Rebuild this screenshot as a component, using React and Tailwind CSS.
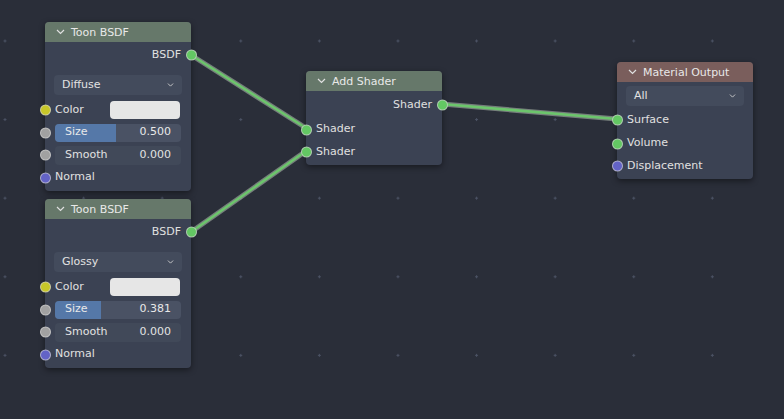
import React from "react";

const SOCKET = {
  shader: "bg-[#63c763]",
  color: "bg-[#c7c729]",
  float: "bg-[#a1a1a1]",
  vector: "bg-[#6363c7]",
};

const Socket = ({ type, side }) => (
  <span
    className={`absolute top-1/2 -translate-y-1/2 w-[11px] h-[11px] rounded-full border border-[#d0d0d0]/70 ${SOCKET[type]} ${
      side === "left" ? "left-[-5.5px]" : "right-[-5.5px]"
    }`}
  />
);

const Chevron = ({ className }) => (
  <svg width="9" height="6" viewBox="0 0 9 6" className={className}>
    <polyline points="1,1 4.5,4.5 8,1" fill="none" stroke="currentColor" strokeWidth="1.2" />
  </svg>
);

const Header = ({ title, tone }) => (
  <div
    className={`h-[20px] flex items-center gap-[6px] pl-[11px] rounded-t-[4px] text-[#e8e8e8] ${tone}`}
  >
    <Chevron className="text-[#e0e0e0]" />
    <span className="leading-none">{title}</span>
  </div>
);

const Dropdown = ({ label }) => (
  <div className="h-[20px] flex items-center justify-between pl-[8px] pr-[7px] rounded-[4px] bg-[#434b5c] text-[#e2e2e2]">
    <span>{label}</span>
    <Chevron className="text-[#d0d0d0] scale-75" />
  </div>
);

const Row = ({ children, h = "h-[22px]", className = "" }) => (
  <div className={`relative flex items-center ${h} ${className}`}>{children}</div>
);

const ToonNode = ({ top, mode, sizeValue, fill }) => (
  <div
    className="absolute left-[45px] w-[146px] h-[169px] rounded-[4px] bg-[#3b4253] shadow-[0_2px_6px_rgba(0,0,0,0.45)]"
    style={{ top }}
  >
    <Header title="Toon BSDF" tone="bg-[#66786a]" />
    <Row className="justify-end pr-[10px] mt-[2px]">
      <span>BSDF</span>
      <Socket type="shader" side="right" />
    </Row>
    <div className="px-[9px] mt-[9px]">
      <Dropdown label={mode} />
    </div>
    <Row className="mt-[4px] pl-[10px] pr-[11px] justify-between">
      <Socket type="color" side="left" />
      <span>Color</span>
      <div className="w-[70px] h-[18px] rounded-[4px] bg-[#e6e6e6]" />
    </Row>
    <Row h="h-[23px]" className="pl-[10px] pr-[10px]">
      <Socket type="float" side="left" />
      <div className="relative w-full h-[18px] rounded-[4px] bg-[#4a5264] overflow-hidden">
        <div className={`absolute inset-y-0 left-0 bg-[#5578a8] ${fill}`} />
        <div className="relative h-full flex items-center justify-between pl-[10px] pr-[10px] text-[#e8e8e8]">
          <span>Size</span>
          <span>{sizeValue}</span>
        </div>
      </div>
    </Row>
    <Row h="h-[22px]" className="pl-[10px] pr-[10px]">
      <Socket type="float" side="left" />
      <div className="w-full h-[19px] rounded-[4px] bg-[#414959] flex items-center justify-between pl-[10px] pr-[10px] text-[#e2e2e2]">
        <span>Smooth</span>
        <span>0.000</span>
      </div>
    </Row>
    <Row h="h-[23px]" className="pl-[10px]">
      <Socket type="vector" side="left" />
      <span>Normal</span>
    </Row>
  </div>
);

const AddShaderNode = () => (
  <div className="absolute left-[306px] top-[71px] w-[136px] h-[94px] rounded-[4px] bg-[#3b4253] shadow-[0_2px_6px_rgba(0,0,0,0.45)]">
    <Header title="Add Shader" tone="bg-[#66786a]" />
    <Row className="justify-end pr-[10px] mt-[3px]">
      <span>Shader</span>
      <Socket type="shader" side="right" />
    </Row>
    <Row h="h-[23px]" className="pl-[10px] mt-[2px]">
      <Socket type="shader" side="left" />
      <span>Shader</span>
    </Row>
    <Row className="pl-[10px]">
      <Socket type="shader" side="left" />
      <span>Shader</span>
    </Row>
  </div>
);

const MaterialOutputNode = () => (
  <div className="absolute left-[617px] top-[62px] w-[136px] h-[117px] rounded-[4px] bg-[#3b4253] shadow-[0_2px_6px_rgba(0,0,0,0.45)]">
    <Header title="Material Output" tone="bg-[#7a5e5c]" />
    <div className="px-[9px] mt-[4px]">
      <Dropdown label="All" />
    </div>
    <Row h="h-[22px]" className="pl-[10px] mt-[3px]">
      <Socket type="shader" side="left" />
      <span>Surface</span>
    </Row>
    <Row h="h-[23px]" className="pl-[10px] mt-[1px]">
      <Socket type="shader" side="left" />
      <span>Volume</span>
    </Row>
    <Row h="h-[22px]" className="pl-[10px]">
      <Socket type="vector" side="left" />
      <span>Displacement</span>
    </Row>
  </div>
);

const links = [
  [191, 55, 306, 128],
  [191, 232, 306, 151],
  [442, 104, 617, 119],
];

export default function App() {
  return (
    <div
      className="relative w-[784px] h-[419px] overflow-hidden bg-[#2a2e39] text-[11px] text-[#e0e0e0] bg-[radial-gradient(circle,#4b5264_1.1px,transparent_1.4px)] bg-[length:78.6px_78.6px] bg-[position:-34.3px_1.7px]"
      style={{ fontFamily: '"DejaVu Sans", sans-serif' }}
    >
      <svg className="absolute inset-0" width="784" height="419">
        {links.map(([x1, y1, x2, y2], i) => (
          <g key={i}>
            <line x1={x1} y1={y1} x2={x2} y2={y2} stroke="#a9b4a9" strokeWidth="5" strokeOpacity="0.6" />
            <line x1={x1} y1={y1} x2={x2} y2={y2} stroke="#6cc56c" strokeWidth="2.6" />
          </g>
        ))}
      </svg>
      <ToonNode top={22} mode="Diffuse" sizeValue="0.500" fill="w-[61px]" />
      <ToonNode top={199} mode="Glossy" sizeValue="0.381" fill="w-[46px]" />
      <AddShaderNode />
      <MaterialOutputNode />
    </div>
  );
}
